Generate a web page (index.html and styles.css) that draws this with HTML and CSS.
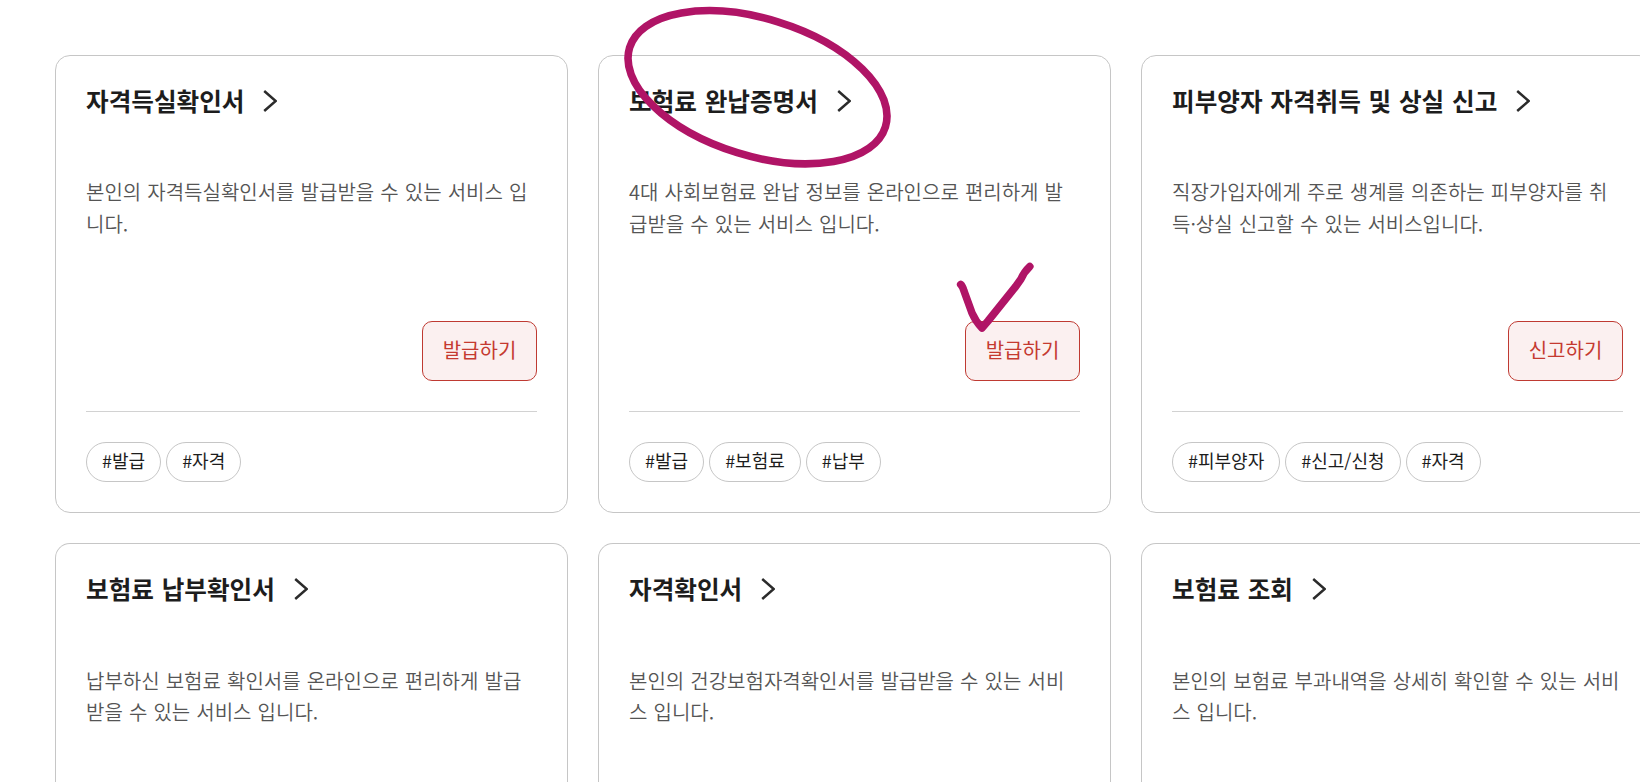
FILE: index.html
```html
<!DOCTYPE html>
<html lang="ko">
<head>
    <meta charset="UTF-8">
    <meta name="viewport" content="width=device-width, initial-scale=1.0">
    <title>민원서비스</title>
    <link rel="stylesheet" href="styles.css">
</head>
<body>

    <div class="service-list">
        <div class="card">
            <h2 class="card-title">자격득실확인서
                <svg class="arrow" viewBox="0 0 14 24"><path d="M1.200 2 L12.700 12 L1.200 22"/></svg>
            </h2>
            <p class="card-desc">본인의 자격득실확인서를 발급받을 수 있는 서비스 입니다.</p>
            <div class="card-action"><button type="button" class="btn">발급하기</button></div>
            <ul class="tags">
                <li>#발급</li>
                <li>#자격</li>
            </ul>
        </div>

        <div class="card">
            <h2 class="card-title">보험료 완납증명서
                <svg class="arrow" viewBox="0 0 14 24"><path d="M1.200 2 L12.700 12 L1.200 22"/></svg>
            </h2>
            <p class="card-desc">4대 사회보험료 완납 정보를 온라인으로 편리하게 발급받을 수 있는 서비스 입니다.</p>
            <div class="card-action"><button type="button" class="btn">발급하기</button></div>
            <ul class="tags">
                <li>#발급</li>
                <li>#보험료</li>
                <li>#납부</li>
            </ul>
        </div>

        <div class="card">
            <h2 class="card-title">피부양자 자격취득 및 상실 신고
                <svg class="arrow" viewBox="0 0 14 24"><path d="M1.200 2 L12.700 12 L1.200 22"/></svg>
            </h2>
            <p class="card-desc">직장가입자에게 주로 생계를 의존하는 피부양자를 취득·상실 신고할 수 있는 서비스입니다.</p>
            <div class="card-action"><button type="button" class="btn">신고하기</button></div>
            <ul class="tags">
                <li>#피부양자</li>
                <li>#신고/신청</li>
                <li>#자격</li>
            </ul>
        </div>

        <div class="card">
            <h2 class="card-title">보험료 납부확인서
                <svg class="arrow" viewBox="0 0 14 24"><path d="M1.200 2 L12.700 12 L1.200 22"/></svg>
            </h2>
            <p class="card-desc">납부하신 보험료 확인서를 온라인으로 편리하게 발급받을 수 있는 서비스 입니다.</p>
        </div>

        <div class="card">
            <h2 class="card-title">자격확인서
                <svg class="arrow" viewBox="0 0 14 24"><path d="M1.200 2 L12.700 12 L1.200 22"/></svg>
            </h2>
            <p class="card-desc">본인의 건강보험자격확인서를 발급받을 수 있는 서비스 입니다.</p>
        </div>

        <div class="card">
            <h2 class="card-title">보험료 조회
                <svg class="arrow" viewBox="0 0 14 24"><path d="M1.200 2 L12.700 12 L1.200 22"/></svg>
            </h2>
            <p class="card-desc">본인의 보험료 부과내역을 상세히 확인할 수 있는 서비스 입니다.</p>
        </div>
    </div>

    <!-- 강조 표시 -->
    <svg class="marks" viewBox="0 0 1640 782">
        <ellipse cx="757.5" cy="87.2" rx="133.9" ry="68.5" transform="rotate(17.2 757.5 87.2)"/>
        <path d="M960.7 284.5 Q962.5 286 964 291 L972 313 Q976 322 982 328 L988 321 L1015.7 286.5 L1021 279 Q1024 272 1029.8 266.5"/>
    </svg>

</body>
</html>
```
FILE: styles.css
```css
* {
    box-sizing: border-box;
}
body {
    margin: 0;
    height: 782px;
    overflow: hidden;
    background-color: #fff;
    color: #1d1d1d;
    font-family: "Noto Sans CJK KR", "Noto Sans", sans-serif;
}
.service-list {
    display: grid;
    grid-template-columns: repeat(3, 513px);
    grid-template-rows: 458px 239px;
    gap: 30px;
    height: 782px;
    padding: 55px 0 0 55px;
}
/* 둘째 줄 카드는 화면 아래로 이어진다 */
.card {
    display: flex;
    flex-direction: column;
    padding: 29px 30px 30px;
    border: 1px solid #c6c6c6;
    border-radius: 15px;
}
.card:nth-child(n+4) {
    border-bottom: none;
    border-radius: 15px 15px 0 0;
}
.card-title {
    display: flex;
    align-items: center;
    gap: 19px;
    height: 32px;
    margin: 0 0 59px;
    padding-bottom: 3px;
    font-size: 24.6px;
    font-weight: 700;
    line-height: 30px;
    word-spacing: 0.9px;
}
.arrow {
    width: 14px;
    height: 24px;
    margin-top: 3px;
    fill: none;
    stroke: #2b2b2b;
    stroke-width: 2.5;
}
.card-desc {
    margin: 0;
    font-size: 20px;
    font-weight: 350;
    line-height: 32px;
    word-spacing: 0.5px;
    color: #555;
    word-break: break-all;
}
.card:nth-child(n+4) .card-desc {
    padding-top: 1px;
    line-height: 31.4px;
}
.card-action {
    display: flex;
    justify-content: flex-end;
    margin-top: auto;
    padding-bottom: 30px;
    border-bottom: 1px solid #d2d2d2;
}
.btn {
    width: 115px;
    height: 60px;
    padding: 0 0 3px;
    border: 1px solid #bf3a32;
    border-radius: 10px;
    background: #fbf0f0;
    color: #c53a30;
    font-family: inherit;
    font-size: 20px;
}
.tags {
    display: flex;
    gap: 5px;
    margin: 30px 0 0;
    padding: 0;
    list-style: none;
}
.tags li {
    height: 40px;
    padding: 0 15px;
    border: 1px solid #c6c6c6;
    border-radius: 20px;
    font-size: 18px;
    line-height: 35px;
}
.marks {
    position: absolute;
    top: 0;
    left: 0;
    width: 1640px;
    height: 782px;
    fill: none;
    stroke: #b01466;
    stroke-width: 7.6;
    stroke-linecap: round;
    stroke-linejoin: round;
    pointer-events: none;
}
```
